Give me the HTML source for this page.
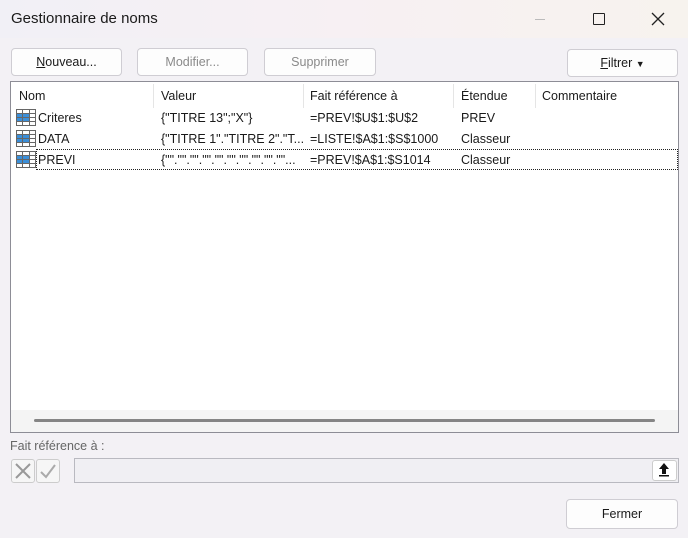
<!DOCTYPE html>
<html><head><meta charset="utf-8"><style>
*{box-sizing:border-box;margin:0;padding:0}
body{width:688px;height:538px;overflow:hidden;background:#f3f1f5;font-family:"Liberation Sans",sans-serif;font-size:12px;color:#1a1a1a;position:relative}
.abs{position:absolute}
.title{left:0;top:0;width:688px;height:38px;background:linear-gradient(90deg,#f1f0f6,#f7f0f3 50%,#f7f3ee)}
.btn{position:absolute;height:28px;border:1px solid #cfcdd3;border-radius:4px;background:#fdfdfd;text-align:center;line-height:26px;font-size:12.5px}
.dis{color:#8a8a8a}
.list{left:10px;top:81px;width:669px;height:352px;border:1px solid #8d8d96;background:#fff}
.hd{position:absolute;top:7px;font-size:12.5px}
.sep{position:absolute;top:2px;width:1px;height:24px;background:#e5e5e5}
.cell{position:absolute;font-size:12.5px}
.ico{position:absolute;left:5px;width:20px;height:17px}
</style></head><body>
<div class="abs title"></div>
<div class="abs" style="left:11px;top:10px;font-size:15px">Gestionnaire de noms</div>
<div class="abs" style="left:535px;top:19px;width:10px;height:1px;background:#bbb"></div>
<div class="abs" style="left:593px;top:13px;width:12px;height:12px;border:1.3px solid #222;border-radius:1px"></div>
<svg class="abs" style="left:651px;top:12px" width="14" height="14"><path d="M1 1L13 13M13 1L1 13" stroke="#222" stroke-width="1.3"/></svg>

<div class="btn" style="left:11px;top:48px;width:111px"><u>N</u>ouveau...</div>
<div class="btn dis" style="left:137px;top:48px;width:111px">Modifier...</div>
<div class="btn dis" style="left:264px;top:48px;width:112px">Supprimer</div>
<div class="btn" style="left:567px;top:49px;width:111px"><u>F</u>iltrer <span style="font-size:9px">▼</span></div>

<div class="abs list">
<div class="hd" style="left:8px">Nom</div>
<div class="sep" style="left:142px"></div>
<div class="hd" style="left:150px">Valeur</div>
<div class="sep" style="left:292px"></div>
<div class="hd" style="left:299px">Fait référence à</div>
<div class="sep" style="left:442px"></div>
<div class="hd" style="left:450px">Étendue</div>
<div class="sep" style="left:524px"></div>
<div class="hd" style="left:531px">Commentaire</div>

<svg class="ico" style="top:27px" viewBox="0 0 20 17"><rect x="0.5" y="0.5" width="19" height="16" fill="#fff" stroke="#666"/><rect x="1" y="5" width="12" height="7" fill="#3b8fd9"/><path d="M0 4.5H20M0 8.5H20M0 12.5H20M6.5 0V17M13.5 0V17" stroke="#666"/></svg>
<div class="cell" style="left:27px;top:29px">Criteres</div>
<div class="cell" style="left:150px;top:29px">{"TITRE 13";"X"}</div>
<div class="cell" style="left:299px;top:29px">=PREV!$U$1:$U$2</div>
<div class="cell" style="left:450px;top:29px">PREV</div>

<svg class="ico" style="top:48px" viewBox="0 0 20 17"><rect x="0.5" y="0.5" width="19" height="16" fill="#fff" stroke="#666"/><rect x="1" y="5" width="12" height="7" fill="#3b8fd9"/><path d="M0 4.5H20M0 8.5H20M0 12.5H20M6.5 0V17M13.5 0V17" stroke="#666"/></svg>
<div class="cell" style="left:27px;top:50px">DATA</div>
<div class="cell" style="left:150px;top:50px">{"TITRE 1"."TITRE 2"."T...</div>
<div class="cell" style="left:299px;top:50px">=LISTE!$A$1:$S$1000</div>
<div class="cell" style="left:450px;top:50px">Classeur</div>

<div class="abs" style="left:25px;top:67px;width:642px;height:21px;border:1px dotted #222"></div>
<svg class="ico" style="top:69px" viewBox="0 0 20 17"><rect x="0.5" y="0.5" width="19" height="16" fill="#fff" stroke="#666"/><rect x="1" y="5" width="12" height="7" fill="#3b8fd9"/><path d="M0 4.5H20M0 8.5H20M0 12.5H20M6.5 0V17M13.5 0V17" stroke="#666"/></svg>
<div class="cell" style="left:27px;top:71px">PREVI</div>
<div class="cell" style="left:150px;top:71px">{"".""."".""."".""."".""."".""...</div>
<div class="cell" style="left:299px;top:71px">=PREV!$A$1:$S1014</div>
<div class="cell" style="left:450px;top:71px">Classeur</div>

<div class="abs" style="left:0;top:328px;width:667px;height:22px;background:#f4f4f4"></div>
<div class="abs" style="left:23px;top:337px;width:621px;height:3px;border-radius:2px;background:#858585"></div>
</div>

<div class="abs" style="left:10px;top:439px;color:#666;font-size:12.5px">Fait référence à :</div>
<div class="abs" style="left:11px;top:459px;width:24px;height:24px;border:1px solid #ccc;border-radius:3px;background:#f6f6f6"></div>
<svg class="abs" style="left:15px;top:463px" width="16" height="16"><path d="M1 1L15 15M15 1L1 15" stroke="#999" stroke-width="2"/></svg>
<div class="abs" style="left:36px;top:459px;width:24px;height:24px;border:1px solid #ccc;border-radius:3px;background:#f6f6f6"></div>
<svg class="abs" style="left:39px;top:463px" width="18" height="16"><path d="M2 9L7 14L16 2" stroke="#aaa" stroke-width="2" fill="none"/></svg>
<div class="abs" style="left:74px;top:458px;width:605px;height:25px;border:1px solid #b9b9c0;background:#f0eff3"></div>
<div class="abs" style="left:652px;top:460px;width:25px;height:21px;border:1px solid #ccc;border-radius:3px;background:#fff"></div>
<svg class="abs" style="left:658px;top:462px" width="12" height="16"><path d="M6 1L1 7H4V12H8V7H11Z" fill="#111"/><rect x="1" y="13" width="10" height="1.5" fill="#111"/></svg>

<div class="btn" style="left:566px;top:499px;width:112px;height:30px;line-height:28px">Fermer</div>
</body></html>
